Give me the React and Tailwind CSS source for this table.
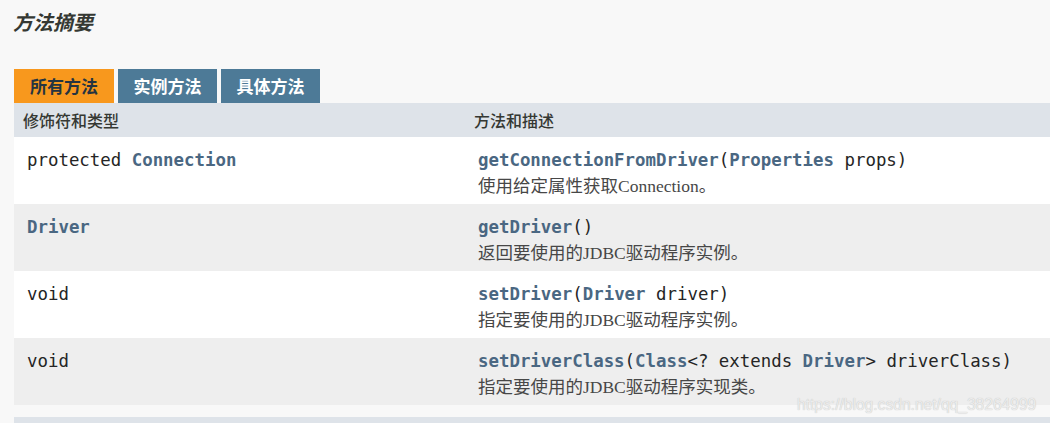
const rows = [
  {
    type: [<span key="a">protected </span>, <b key="b" className="text-[#4a6782]">Connection</b>],
    sig: [
      <b key="a" className="text-[#4a6782]">getConnectionFromDriver</b>,
      <span key="b">(</span>,
      <b key="c" className="text-[#4a6782]">Properties</b>,
      <span key="d"> props)</span>,
    ],
    desc: "使用给定属性获取Connection。",
  },
  {
    type: [<b key="a" className="text-[#4a6782]">Driver</b>],
    sig: [<b key="a" className="text-[#4a6782]">getDriver</b>, <span key="b">()</span>],
    desc: "返回要使用的JDBC驱动程序实例。",
  },
  {
    type: [<span key="a">void</span>],
    sig: [
      <b key="a" className="text-[#4a6782]">setDriver</b>,
      <span key="b">(</span>,
      <b key="c" className="text-[#4a6782]">Driver</b>,
      <span key="d"> driver)</span>,
    ],
    desc: "指定要使用的JDBC驱动程序实例。",
  },
  {
    type: [<span key="a">void</span>],
    sig: [
      <b key="a" className="text-[#4a6782]">setDriverClass</b>,
      <span key="b">(</span>,
      <b key="c" className="text-[#4a6782]">Class</b>,
      <span key="d">&lt;? extends </span>,
      <b key="e" className="text-[#4a6782]">Driver</b>,
      <span key="f">&gt; driverClass)</span>,
    ],
    desc: "指定要使用的JDBC驱动程序实现类。",
  },
];

const mono = "font-['DejaVu_Sans_Mono',monospace] text-[17.4px] leading-[22px] text-[#252525]";

export default function App() {
  return (
    <div className="relative w-[1050px] h-[423px] overflow-hidden bg-[#f8f8f8] font-['Noto_Sans_CJK_SC',sans-serif]">
      <h3 className="pl-[13px] pt-[9px] h-[69px] text-[20px] leading-[26px] font-bold italic text-[#353833]">
        方法摘要
      </h3>
      <div className="ml-[14px]">
        <div className="flex gap-[4px] h-[34px]">
          <div className="w-[100px] bg-[#f8981d] text-[#253441] font-bold text-[17px] flex items-center justify-center">
            所有方法
          </div>
          <div className="w-[99px] bg-[#4d7a97] text-white font-bold text-[17px] flex items-center justify-center">
            实例方法
          </div>
          <div className="w-[99px] bg-[#4d7a97] text-white font-bold text-[17px] flex items-center justify-center">
            具体方法
          </div>
        </div>
        <div className="flex h-[34px] bg-[#dee3e9] items-center text-[16px] text-[#353833] font-medium">
          <div className="w-[460px] pl-[9px]">修饰符和类型</div>
          <div>方法和描述</div>
        </div>
        {rows.map((r, i) => (
          <div
            key={i}
            className={`flex h-[67px] pt-[12px] ${i % 2 === 0 ? "bg-white" : "bg-[#eeeeee]"}`}
          >
            <div className={`w-[464px] pl-[13px] ${mono}`}>{r.type}</div>
            <div className="flex flex-col">
              <div className={mono}>{r.sig}</div>
              <div className="mt-[4px] text-[17.5px] leading-[22px] text-[#474747] font-['Liberation_Serif','Noto_Sans_CJK_SC',serif]">
                {r.desc}
              </div>
            </div>
          </div>
        ))}
        <div className="h-[12px]" />
        <div className="h-[10px] bg-[#dee3e9]" />
      </div>
      <div className="absolute left-[797px] top-[395px] text-[15.6px] leading-[20px] text-[#ececec] [text-shadow:0_0_1px_#b8b8b8] font-['Liberation_Sans',sans-serif]">
        https://blog.csdn.net/qq_38264999
      </div>
    </div>
  );
}
